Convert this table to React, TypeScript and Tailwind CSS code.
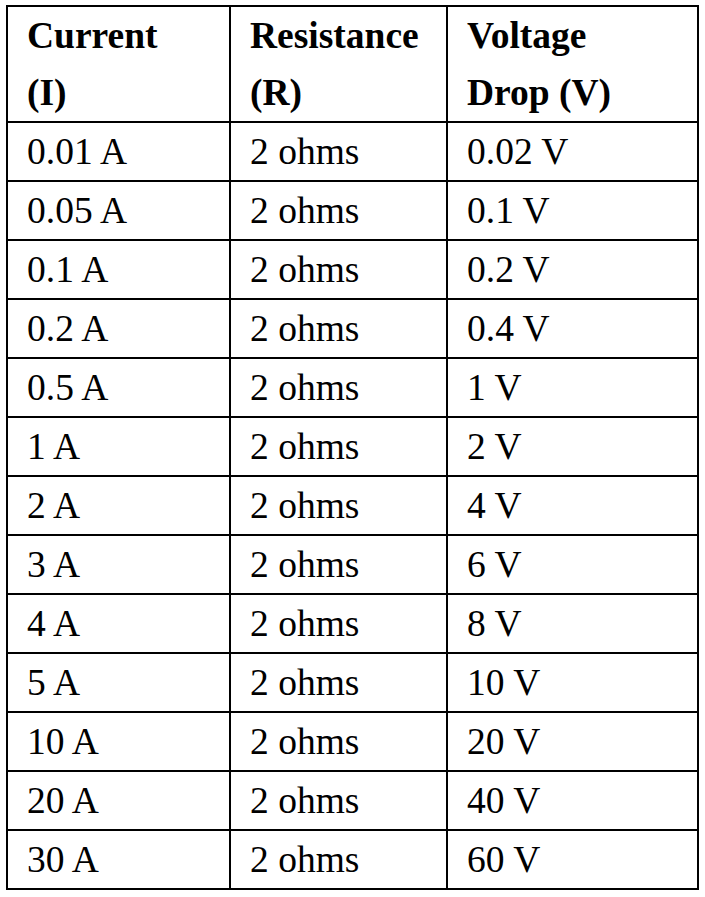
const rows: [string, string, string][] = [
  ["0.01 A", "2 ohms", "0.02 V"],
  ["0.05 A", "2 ohms", "0.1 V"],
  ["0.1 A", "2 ohms", "0.2 V"],
  ["0.2 A", "2 ohms", "0.4 V"],
  ["0.5 A", "2 ohms", "1 V"],
  ["1 A", "2 ohms", "2 V"],
  ["2 A", "2 ohms", "4 V"],
  ["3 A", "2 ohms", "6 V"],
  ["4 A", "2 ohms", "8 V"],
  ["5 A", "2 ohms", "10 V"],
  ["10 A", "2 ohms", "20 V"],
  ["20 A", "2 ohms", "40 V"],
  ["30 A", "2 ohms", "60 V"],
];

const cell = "border-2 border-black pl-[19px] pr-2 align-middle";

export default function App() {
  return (
    <div className="min-h-screen bg-white pl-[6px] pt-[5px] text-black font-['Liberation_Serif','Times_New_Roman',serif] text-[37.5px] leading-[57px]">
      <table className="border-collapse w-[691px] table-fixed">
        <colgroup>
          <col className="w-[223px]" />
          <col className="w-[217px]" />
          <col className="w-[251px]" />
        </colgroup>
        <thead>
          <tr className="h-[116px] font-bold">
            <th className={`${cell} text-left font-bold`}>
              Current
              <br />
              (I)
            </th>
            <th className={`${cell} text-left font-bold`}>
              Resistance
              <br />
              (R)
            </th>
            <th className={`${cell} text-left font-bold`}>
              Voltage
              <br />
              Drop (V)
            </th>
          </tr>
        </thead>
        <tbody>
          {rows.map((r, i) => (
            <tr key={i} className="h-[59px]">
              <td className={cell}>{r[0]}</td>
              <td className={cell}>{r[1]}</td>
              <td className={cell}>{r[2]}</td>
            </tr>
          ))}
        </tbody>
      </table>
    </div>
  );
}
